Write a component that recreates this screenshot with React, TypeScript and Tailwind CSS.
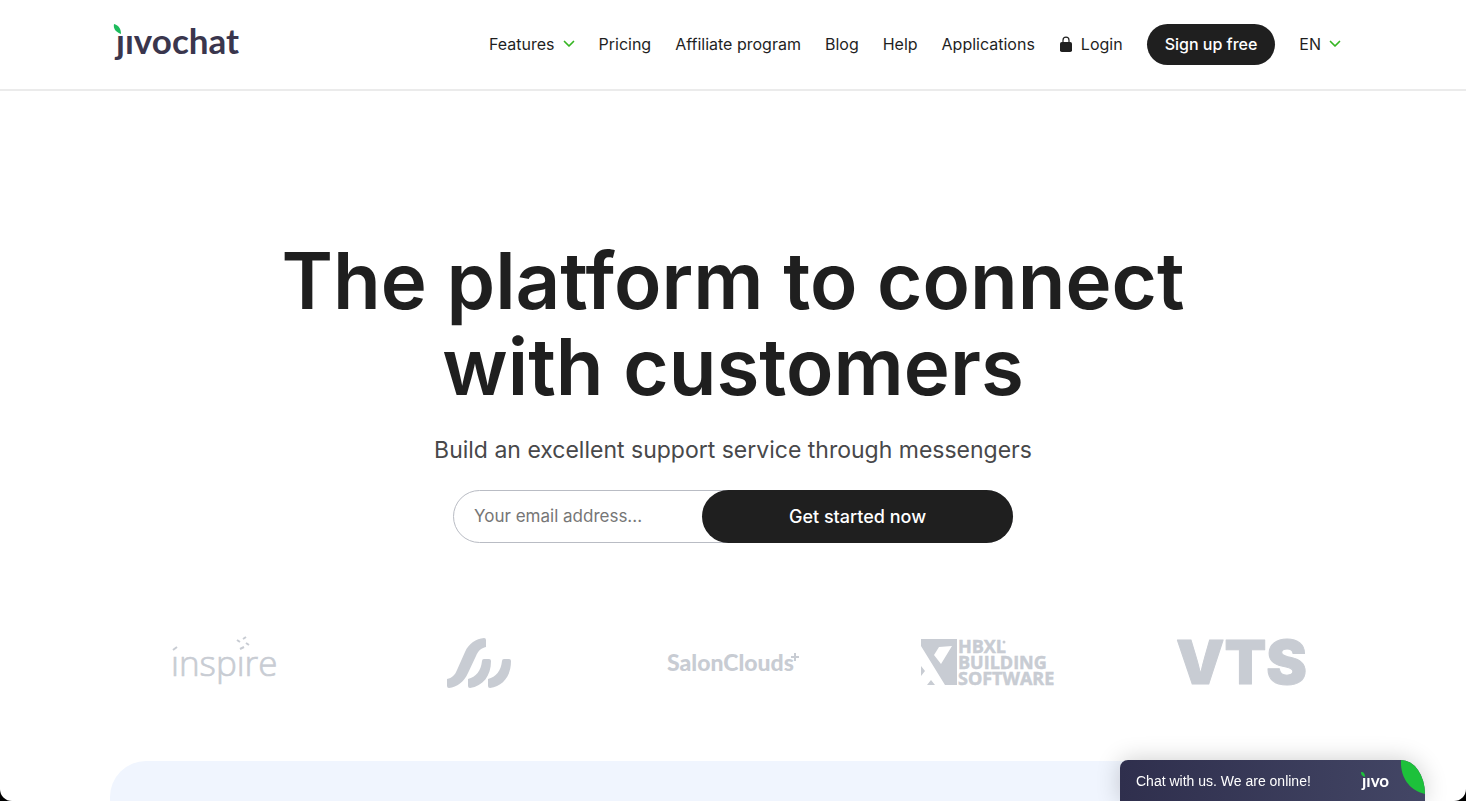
import React from "react";

const Chevron: React.FC = () => (
  <svg width="12" height="8" viewBox="0 0 12 8" fill="none" aria-hidden="true">
    <path d="M1.5 1.5 6 6l4.5-4.5" stroke="#35b522" strokeWidth="1.7" strokeLinecap="round" strokeLinejoin="round" />
  </svg>
);

const LockIcon: React.FC = () => (
  <svg width="14" height="16" viewBox="0 0 14 16" fill="none" aria-hidden="true">
    <path d="M4 7V4.2a3 3 0 0 1 6 0V7" stroke="#1f1f1f" strokeWidth="1.2" />
    <rect x="1" y="6" width="12" height="10" rx="1.8" fill="#1f1f1f" />
  </svg>
);

const JivoChatLogo: React.FC = () => (
  <svg width="130" height="46" viewBox="0 0 130 46" className="overflow-visible" role="img" aria-label="jivochat">
    <text x="3" y="34" fontSize="35" fontWeight="700" fill="#3a364d" className="font-['Lato',sans-serif]">
      ȷıvochat
    </text>
    <path d="M1 4c4 1 7 4 7 10C3 12 0 9 1 4Z" fill="#1dbb5c" />
  </svg>
);

const InspireLogo: React.FC = () => (
  <svg width="106" height="54" viewBox="0 0 106 54" className="overflow-visible" role="img" aria-label="inspire">
    <text x="0" y="40" fontSize="35" fontWeight="300" fill="#c8ccd3" stroke="#c8ccd3" strokeWidth="0.7" className="font-['Open_Sans',sans-serif]">
      ınspıre
    </text>
    <path d="m2 14 4-3M69 13l4-2M66 4l3 2M72 3l3-2M75 7l3 2" stroke="#c8ccd3" strokeWidth="2" />
  </svg>
);

const WavesLogo: React.FC = () => (
  <svg width="66" height="52" viewBox="0 0 66 52" role="img" aria-label="Waves" fill="#c8ccd3">
    <path d="M1 42c5-1 8-4 10-9l8-18C23 6 30 2 38 1q2 0 2 2v7c-5 1-8 4-10 9l-8 17C18 45 11 50 3 51q-2 0-2-2Z" />
    <path d="M22 42c8-2 13-8 14-18q0-2 2-2h5q2 0 2 2c0 15-8 25-21 27q-2 0-2-2Z" />
    <path d="M42 42c8-2 13-8 14-18q0-2 2-2h5q2 0 2 2c0 15-8 25-21 27q-2 0-2-2Z" />
  </svg>
);

const SalonCloudsLogo: React.FC = () => (
  <svg width="134" height="30" viewBox="0 0 134 30" role="img" aria-label="SalonClouds+">
    <text x="1" y="23" fontSize="23" fontWeight="900" fill="#c8ccd3" className="font-['Lato',sans-serif]">
      SalonClouds
    </text>
    <path d="M129 5v8M125 9h8" stroke="#c8ccd3" strokeWidth="2" />
  </svg>
);

const HbxlLogo: React.FC = () => (
  <svg width="134" height="50" viewBox="0 0 134 50" className="overflow-visible" role="img" aria-label="HBXL Building Software" fill="#c8ccd3">
    <path fillRule="evenodd" d="M1 1h36v46H25L1 8ZM14 17l7 9L32 8 19 9Z" />
    <path d="M1 28l4 5-4 5ZM7 47l4-5 4 5Z" />
    <g fontSize="18" fontWeight="700" stroke="#c8ccd3" strokeWidth="0.5" className="font-['Open_Sans',sans-serif]">
      <text x="38" y="15">HBXL</text>
      <text x="38" y="31">BUILDING</text>
      <text x="38" y="47">SOFTWARE</text>
    </g>
    <circle cx="84" cy="4" r="1.5" />
  </svg>
);

const VtsLogo: React.FC = () => (
  <svg width="134" height="50" viewBox="0 0 134 50" className="overflow-visible" role="img" aria-label="VTS">
    <text x="1" y="46" fontSize="61" fontWeight="900" fill="#c8ccd3" stroke="#c8ccd3" strokeWidth="1" strokeLinejoin="round" className="font-['Inter',sans-serif]">
      VTS
    </text>
  </svg>
);

const Header: React.FC = () => (
  <header className="border-b-2 border-[#ebebeb]">
    <div className="max-w-[1240px] mx-auto h-[89px] flex items-center justify-between pr-3">
      <a href="/" className="pb-1">
        <JivoChatLogo />
      </a>
      <nav className="flex items-center gap-6 pb-px text-base whitespace-nowrap">
        <button className="flex items-center gap-2">
          Features
          <Chevron />
        </button>
        <a href="/pricing">Pricing</a>
        <a href="/affiliate">Affiliate program</a>
        <a href="/blog">Blog</a>
        <a href="/help">Help</a>
        <a href="/apps">Applications</a>
        <a href="/login" className="flex items-center gap-2">
          <LockIcon />
          Login
        </a>
        <a href="/signup" className="bg-[#1f1f1f] text-white font-medium rounded-full h-[41px] px-[18px] flex items-center">
          Sign up free
        </a>
        <button className="flex items-center gap-2">
          EN
          <Chevron />
        </button>
      </nav>
    </div>
  </header>
);

const ChatWidget: React.FC = () => (
  <button className="fixed bottom-0 right-[41px] w-[305px] h-[41px] pl-4 pr-9 flex items-center justify-between rounded-tl-lg overflow-hidden rounded-tr-[24px_34px] bg-linear-to-r from-[#2f2f4d] to-[#434665] text-white shadow-[0_0_24px_rgba(0,0,0,0.2)] font-['Liberation_Sans',Arial,sans-serif] text-sm">
    <span>Chat with us. We are online!</span>
    <svg width="30" height="24" viewBox="0 0 30 24" className="overflow-visible" role="img" aria-label="jivo">
      <text x="3" y="18" fontSize="17" fontWeight="700" fill="#fff" className="font-['Lato',sans-serif]">
        ȷıvo
      </text>
      <path d="M2 3c3 0 4 2 4 5C3 7 2 6 2 3Z" fill="#1dc13b" />
    </svg>
    <svg width="24" height="35" viewBox="0 0 24 35" className="absolute top-0 right-0" aria-hidden="true">
      <path d="M0 0h24v34C9 31-1 18 0 0Z" fill="#1dc13b" />
    </svg>
  </button>
);

const App: React.FC = () => {
  return (
    <div className="bg-black">
      <div className="min-h-screen flex flex-col bg-white rounded-b-xl overflow-hidden text-[#1f1f1f] font-['Inter',sans-serif]">
        <Header />

        {/* Hero */}
        <main className="flex flex-col items-center pt-[147px]">
          <h1 className="max-w-[1000px] text-center text-[78px] leading-[86px] font-semibold">
            The platform to connect with customers
          </h1>
          <p className="mt-6 text-[23px] leading-8 text-[#48484a]">
            Build an excellent support service through messengers
          </p>
          <form className="mt-6 w-full max-w-[560px] h-[53px] flex border border-[#b9bcc4] rounded-full">
            <input
              type="email"
              aria-label="Your email address"
              placeholder="Your email address..."
              className="flex-1 min-w-0 pl-5 text-[17px] outline-none placeholder:text-[#767676]"
            />
            <button
              type="button"
              className="w-[311px] -m-px rounded-full bg-[#1f1f1f] text-white text-lg font-medium"
            >
              Get started now
            </button>
          </form>
        </main>

        {/* Customers */}
        <div className="w-full max-w-[1272px] mx-auto mt-[92px] h-[56px] grid grid-cols-5 items-center justify-items-center">
          <InspireLogo />
          <WavesLogo />
          <SalonCloudsLogo />
          <HbxlLogo />
          <VtsLogo />
        </div>

        <section className="w-full max-w-[1246px] mx-auto mt-[70px] min-h-[40px] flex-1 bg-[#f0f5fe] rounded-t-[36px]"></section>
      </div>
      <ChatWidget />
    </div>
  );
};

export default App;
